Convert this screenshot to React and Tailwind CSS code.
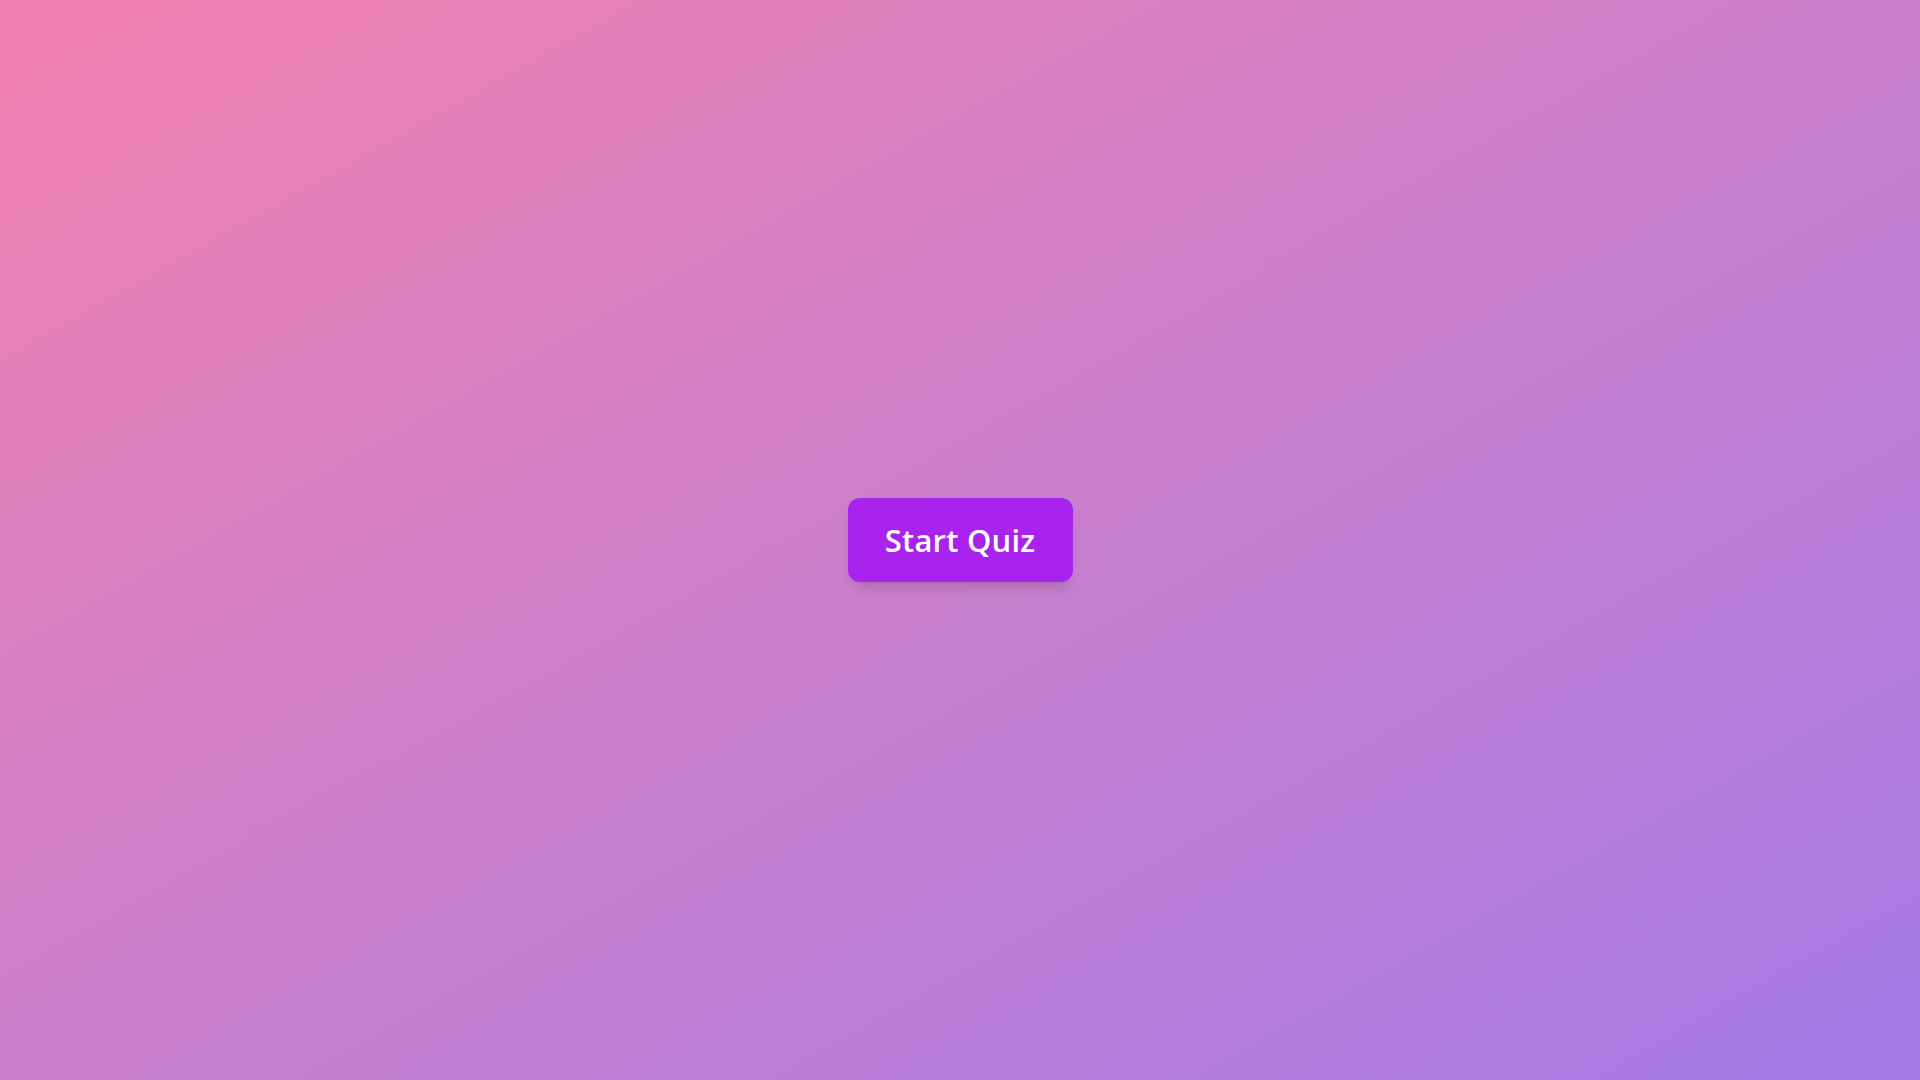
import React from 'react';

export default function App() {
  return (
    <div className="flex h-screen w-full items-center justify-center bg-gradient-to-br from-[#f17fae] to-[#a47ae8]">
      <button
        className="flex h-[84px] w-[225px] items-center justify-center rounded-xl bg-[#a923ee] text-[31px] font-semibold leading-none tracking-[0.2px] text-white shadow-lg"
        style={{ fontFamily: '"Open Sans", "Noto Sans", sans-serif' }}
      >
        Start Quiz
      </button>
    </div>
  );
}
